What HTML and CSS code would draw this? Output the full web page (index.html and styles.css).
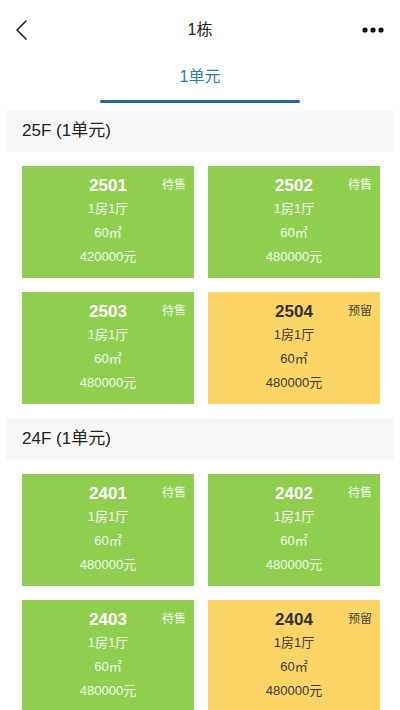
FILE: index.html
```html
<!DOCTYPE html>
<html lang="zh">
<head>
<meta charset="utf-8">
<link rel="stylesheet" href="styles.css">
</head>
<body>
<div class="page">
  <header class="nav">
    <svg class="back" width="14" height="22" viewBox="0 0 14 22"><polyline points="11,2 2,11 11,20" fill="none" stroke="#222" stroke-width="1.6" stroke-linecap="round" stroke-linejoin="round"/></svg>
    <div class="title">1栋</div>
    <svg class="more" width="22" height="6" viewBox="0 0 22 6"><circle cx="3" cy="3" r="2.6" fill="#111"/><circle cx="11" cy="3" r="2.6" fill="#111"/><circle cx="19" cy="3" r="2.6" fill="#111"/></svg>
  </header>
  <div class="tabs">
    <div class="tab">1单元</div>
    <div class="tab-line"></div>
  </div>

  <section class="floor">
    <div class="floor-head">25F (1单元)</div>
    <div class="grid">
      <div class="card sale"><div class="num">2501</div><div class="status">待售</div><div class="line">1房1厅</div><div class="line">60㎡</div><div class="line">420000元</div></div>
      <div class="card sale"><div class="num">2502</div><div class="status">待售</div><div class="line">1房1厅</div><div class="line">60㎡</div><div class="line">480000元</div></div>
      <div class="card sale"><div class="num">2503</div><div class="status">待售</div><div class="line">1房1厅</div><div class="line">60㎡</div><div class="line">480000元</div></div>
      <div class="card hold"><div class="num">2504</div><div class="status">预留</div><div class="line">1房1厅</div><div class="line">60㎡</div><div class="line">480000元</div></div>
    </div>
  </section>

  <section class="floor">
    <div class="floor-head">24F (1单元)</div>
    <div class="grid">
      <div class="card sale"><div class="num">2401</div><div class="status">待售</div><div class="line">1房1厅</div><div class="line">60㎡</div><div class="line">480000元</div></div>
      <div class="card sale"><div class="num">2402</div><div class="status">待售</div><div class="line">1房1厅</div><div class="line">60㎡</div><div class="line">480000元</div></div>
      <div class="card sale"><div class="num">2403</div><div class="status">待售</div><div class="line">1房1厅</div><div class="line">60㎡</div><div class="line">480000元</div></div>
      <div class="card hold"><div class="num">2404</div><div class="status">预留</div><div class="line">1房1厅</div><div class="line">60㎡</div><div class="line">480000元</div></div>
    </div>
  </section>
</div>
</body>
</html>
```
FILE: styles.css
```css
* { box-sizing: border-box; }
html, body { margin: 0; padding: 0; background: #fff; }
body {
  font-family: "Liberation Sans", "Noto Sans CJK SC", sans-serif;
  color: #222;
  width: 400px;
  height: 710px;
  overflow: hidden;
}
.nav {
  height: 60px;
  display: flex;
  align-items: center;
  justify-content: space-between;
  padding: 0 16px 0 15px;
  position: relative;
}
.back { display: block; }
.more { display: block; }
.title {
  position: absolute;
  left: 0; right: 0;
  top: 0; height: 60px;
  line-height: 60px;
  text-align: center;
  font-size: 16px;
  color: #222;
  pointer-events: none;
}
.tabs {
  height: 50px;
  display: flex;
  flex-direction: column;
  align-items: center;
}
.tab {
  font-size: 16px;
  color: #2a7fae;
  line-height: 20px;
  margin-top: 7px;
}
.tab-line {
  width: 200px;
  height: 3px;
  border-radius: 2px;
  background: #1f6f98;
  margin-top: 13px;
}
.floor-head {
  margin: 0 6px;
  height: 42px;
  line-height: 42px;
  background: #f7f7f7;
  padding-left: 16px;
  font-size: 17px;
  color: #222;
}
.floor { padding-bottom: 14px; }
.grid {
  display: grid;
  grid-template-columns: 172px 172px;
  column-gap: 14px;
  row-gap: 14px;
  padding: 14px 0 0 22px;
}
.card {
  height: 112px;
  position: relative;
  text-align: center;
  padding-top: 9px;
}
.card.sale { background: #8fce4f; color: #fff; }
.card.hold { background: #fdd567; color: #333; }
.num {
  font-size: 17px;
  font-weight: bold;
  line-height: 22px;
}
.status {
  position: absolute;
  top: 12px;
  right: 8px;
  font-size: 12px;
  line-height: 14px;
}
.card.sale .status { color: #f3fbe9; }
.card.hold .status { color: #444; }
.line {
  font-size: 13px;
  line-height: 24px;
}
.card.sale .line { color: #f5fbef; }
.card.hold .line { color: #3a3a3a; }
```
